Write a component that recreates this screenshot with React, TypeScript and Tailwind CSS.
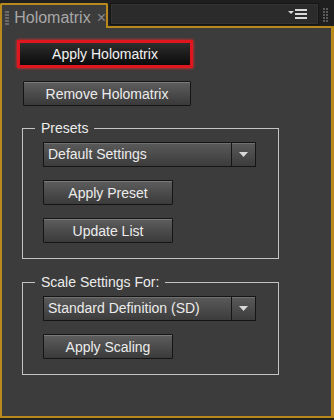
const font = { fontFamily: '"Liberation Sans", "DejaVu Sans", sans-serif' };

function Btn({ label, w }: { label: string; w: string }) {
  return (
    <button
      className={`${w} h-[25px] border border-[#151515] rounded-[1px] bg-gradient-to-b from-[#5e5e5e] to-[#3a3a3a] text-[#ececec] text-[14px] leading-none shadow-[inset_0_1px_0_#7a7a7a]`}
    >
      {label}
    </button>
  );
}

function Dropdown({ value }: { value: string }) {
  return (
    <div className="flex w-[213px] h-[25px] border border-[#151515] bg-gradient-to-b from-[#5a5a5a] to-[#3c3c3c] shadow-[inset_0_1px_0_#707070]">
      <div className="flex-1 flex items-center pl-[4px] text-[14px] text-[#ececec] border-r border-[#151515]">
        {value}
      </div>
      <div className="w-[23px] flex items-center justify-center">
        <svg width="9" height="5" viewBox="0 0 9 5">
          <path d="M0 0h9L4.5 5z" fill="#d8d8d8" />
        </svg>
      </div>
    </div>
  );
}

function Group({ title, children }: { title: string; children: React.ReactNode }) {
  return (
    <fieldset className="ml-[20px] w-[257px] border border-[#c4c4c4] pl-[20px] pb-[15px]">
      <legend className="-ml-[8px] px-[6px] text-[14px] text-[#ececec] leading-[16px]">{title}</legend>
      {children}
    </fieldset>
  );
}

export default function App() {
  return (
    <div className="w-[334px] h-[420px] bg-[#1f1f1f] flex flex-col" style={font}>
      {/* tab strip */}
      <div className="flex h-[28px] pt-[3px]">
        <div className="w-[108px] border-l-2 border-t-2 border-r-2 border-[#b8891c] rounded-t-[2px] bg-[#3c3c3c] flex items-center pl-[3px] -mb-[2px]">
          <div className="grid grid-cols-2 gap-x-[1px] gap-y-[1px] mr-[7px]">
            {Array.from({ length: 10 }).map((_, i) => (
              <span key={i} className="w-[2px] h-[2px] bg-[#6a6a6a]" />
            ))}
          </div>
          <span className="text-[16px] text-[#a8a8a8]">Holomatrix</span>
          <span className="ml-[6px] text-[16px] leading-none text-[#8a8a8a]">×</span>
        </div>
        <div className="flex-1 flex border-b-2 border-[#b8891c] pr-[3px]">
          <div className="flex-1 ml-[2px] mb-[1px] bg-[#2b2b2b] border border-[#151515] shadow-[inset_0_0_0_1px_#333] flex items-center justify-end pr-[10px]">
            <svg width="20" height="10" viewBox="0 0 20 10">
              <path d="M0 2h6L3 5z" fill="#d8d8d8" />
              <rect x="7" y="0" width="12" height="2" fill="#d8d8d8" />
              <rect x="7" y="4" width="12" height="2" fill="#d8d8d8" />
              <rect x="7" y="8" width="12" height="2" fill="#d8d8d8" />
            </svg>
          </div>
          <div className="w-[12px] flex items-center justify-center">
            <div className="grid grid-cols-2 gap-[1px]">
              {Array.from({ length: 10 }).map((_, i) => (
                <span key={i} className="w-[2px] h-[2px] bg-[#5a5a5a]" />
              ))}
            </div>
          </div>
        </div>
      </div>

      {/* panel body */}
      <div className="flex-1 mb-[2px] border-l-2 border-r-[3px] border-b-2 border-[#b8891c] bg-[#3c3c3c] flex flex-col pt-[12px]">
        <div className="ml-[15px] w-[176px] h-[28px] border-[3px] border-[#e0161e] shadow-[0_0_3px_#ff2a2a] flex items-center justify-center bg-gradient-to-b from-[#2e2e2e] to-[#0c0c0c] text-[14px] text-[#f2f2f2]">
          Apply Holomatrix
        </div>
        <div className="ml-[21px] mt-[13px]">
          <Btn label="Remove Holomatrix" w="w-[168px]" />
        </div>

        <div className="mt-[14px]">
          <Group title="Presets">
            <div className="mt-[6px]">
              <Dropdown value="Default Settings" />
            </div>
            <div className="mt-[13px]">
              <Btn label="Apply Preset" w="w-[130px]" />
            </div>
            <div className="mt-[13px]">
              <Btn label="Update List" w="w-[130px]" />
            </div>
          </Group>
        </div>

        <div className="mt-[15px]">
          <Group title="Scale Settings For:">
            <div className="mt-[6px]">
              <Dropdown value="Standard Definition (SD)" />
            </div>
            <div className="mt-[13px]">
              <Btn label="Apply Scaling" w="w-[130px]" />
            </div>
          </Group>
        </div>
      </div>
    </div>
  );
}
